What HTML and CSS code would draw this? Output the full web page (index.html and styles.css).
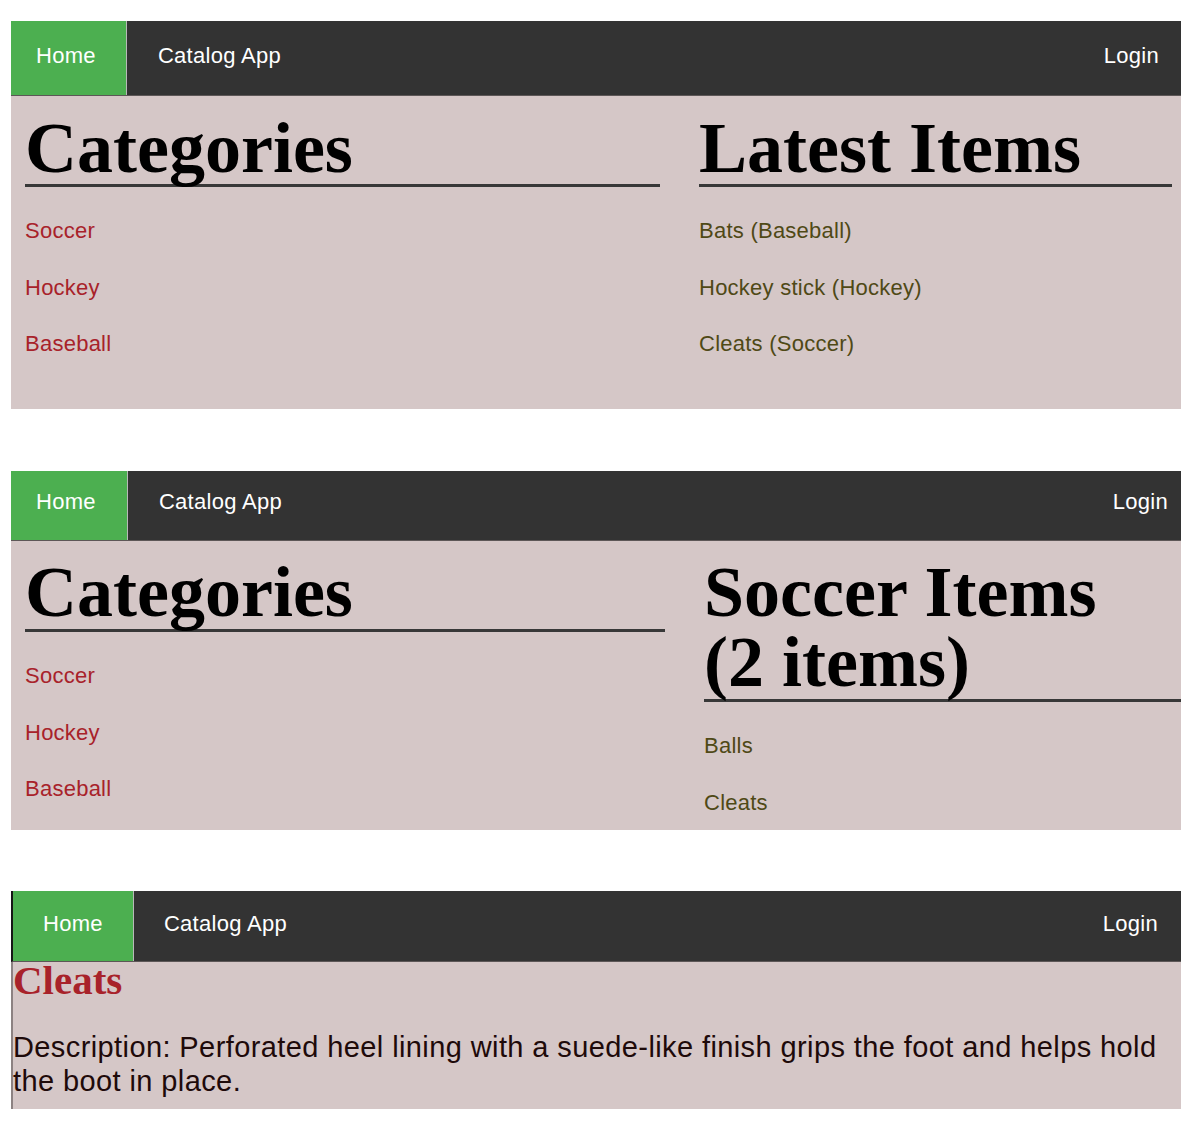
FILE: index.html
```html
<!DOCTYPE html>
<html lang="en">
<head>
<meta charset="utf-8">
<title>Catalog App</title>
<link rel="stylesheet" href="styles.css">
</head>
<body>
<div class="page">

  <section class="shot shot-1">
    <nav class="topnav">
      <a class="nav-link nav-home" href="#">Home</a>
      <a class="nav-link nav-brand" href="#">Catalog App</a>
      <a class="nav-link nav-login" href="#">Login</a>
    </nav>
    <div class="content columns">
      <div class="col">
        <h1 class="col-title">Categories</h1>
        <ul class="link-list">
          <li><a class="cat-link" href="#">Soccer</a></li>
          <li><a class="cat-link" href="#">Hockey</a></li>
          <li><a class="cat-link" href="#">Baseball</a></li>
        </ul>
      </div>
      <div class="col">
        <h1 class="col-title">Latest Items</h1>
        <ul class="link-list">
          <li><a class="item-link" href="#">Bats (Baseball)</a></li>
          <li><a class="item-link" href="#">Hockey stick (Hockey)</a></li>
          <li><a class="item-link" href="#">Cleats (Soccer)</a></li>
        </ul>
      </div>
    </div>
  </section>

  <section class="shot shot-2">
    <nav class="topnav">
      <a class="nav-link nav-home" href="#">Home</a>
      <a class="nav-link nav-brand" href="#">Catalog App</a>
      <a class="nav-link nav-login" href="#">Login</a>
    </nav>
    <div class="content columns">
      <div class="col">
        <h1 class="col-title">Categories</h1>
        <ul class="link-list">
          <li><a class="cat-link" href="#">Soccer</a></li>
          <li><a class="cat-link" href="#">Hockey</a></li>
          <li><a class="cat-link" href="#">Baseball</a></li>
        </ul>
      </div>
      <div class="col">
        <h1 class="col-title">Soccer Items <span class="nowrap">(2 items)</span></h1>
        <ul class="link-list">
          <li><a class="item-link" href="#">Balls</a></li>
          <li><a class="item-link" href="#">Cleats</a></li>
        </ul>
      </div>
    </div>
  </section>

  <section class="shot shot-3">
    <nav class="topnav">
      <a class="nav-link nav-home" href="#">Home</a>
      <a class="nav-link nav-brand" href="#">Catalog App</a>
      <a class="nav-link nav-login" href="#">Login</a>
    </nav>
    <div class="content detail">
      <h2 class="item-title">Cleats</h2>
      <p class="item-desc">Description: Perforated heel lining with a suede-like finish grips the foot and helps hold the boot in place.</p>
    </div>
  </section>

</div>
</body>
</html>
```

FILE: styles.css
```css
* {
  box-sizing: border-box;
}

html, body {
  margin: 0;
  padding: 0;
  background: #ffffff;
}

body {
  font-family: "Liberation Sans", Arial, Helvetica, sans-serif;
}

.page {
  display: flex;
  flex-direction: column;
  padding: 21px 21px 0 11px;
}

.shot {
  --nav-pt: 22px;
  --nav-pb: 27px;
  --home-pl: 25px;
  --home-pr: 30px;
  --brand-pl: 31px;
  --login-pr: 22px;
}

.shot-2 {
  margin-top: 62px;
  --nav-pt: 18px;
  --nav-pb: 26px;
  --home-pl: 25px;
  --home-pr: 31px;
  --brand-pl: 31px;
  --login-pr: 13px;
}

.shot-3 {
  margin-top: 61px;
  --nav-pt: 20px;
  --nav-pb: 25px;
  --home-pl: 30px;
  --home-pr: 30px;
  --brand-pl: 30px;
  --login-pr: 23px;
}

/* ---------- top navigation ---------- */
.topnav {
  display: flex;
  align-items: stretch;
  background: #333333;
  border-bottom: 1px solid #5d5757;
}

.nav-link {
  display: block;
  color: #ffffff;
  text-decoration: none;
  font-size: 22px;
  letter-spacing: 0.3px;
  line-height: 25px;
  padding-top: var(--nav-pt);
  padding-bottom: var(--nav-pb);
}

.nav-home {
  background: #4caf50;
  padding-left: var(--home-pl);
  padding-right: var(--home-pr);
  border-right: 1px solid #b9b9b9;
}

.nav-brand {
  padding-left: var(--brand-pl);
}

.nav-login {
  margin-left: auto;
  padding-right: var(--login-pr);
}

/* ---------- content ---------- */
.content {
  background: #d5c7c7;
}

.columns {
  display: grid;
  grid-template-columns: 635px 473px;
  column-gap: 39px;
  padding: 16px 9px 53px 14px;
  align-items: start;
}

.shot-2 .columns {
  grid-template-columns: 640px 477px;
  padding: 16px 0 15px 14px;
}

.col-title {
  margin: 0;
  font-family: "Liberation Serif", "Times New Roman", serif;
  font-weight: bold;
  font-size: 72px;
  line-height: 72px;
  color: #000000;
  border-bottom: 3px solid #383838;
}

.shot-2 .col-title {
  line-height: 70px;
  padding-bottom: 2px;
}

.nowrap {
  white-space: nowrap;
}

.link-list {
  list-style: none;
  margin: 31px 0 0;
  padding: 0;
  display: flex;
  flex-direction: column;
  gap: 31.5px;
}

.link-list li {
  font-size: 22px;
  letter-spacing: 0.25px;
  line-height: 25px;
}

.cat-link,
.item-link {
  text-decoration: none;
}

.cat-link {
  color: #a8222a;
}

.item-link {
  color: #4f4916;
}

/* ---------- detail page ---------- */
.shot-3 .topnav {
  border-left: 2px solid #161616;
}

.detail {
  border-left: 2px solid #8c8282;
  padding: 0 0 11px 0;
}

.item-title {
  margin: 0;
  font-family: "Liberation Serif", "Times New Roman", serif;
  font-weight: bold;
  font-size: 41px;
  line-height: 36px;
  color: #a8222a;
}

.item-desc {
  margin: 32px 0 0;
  font-size: 29px;
  letter-spacing: 0.4px;
  line-height: 34px;
  color: #1e0a0a;
}
```
